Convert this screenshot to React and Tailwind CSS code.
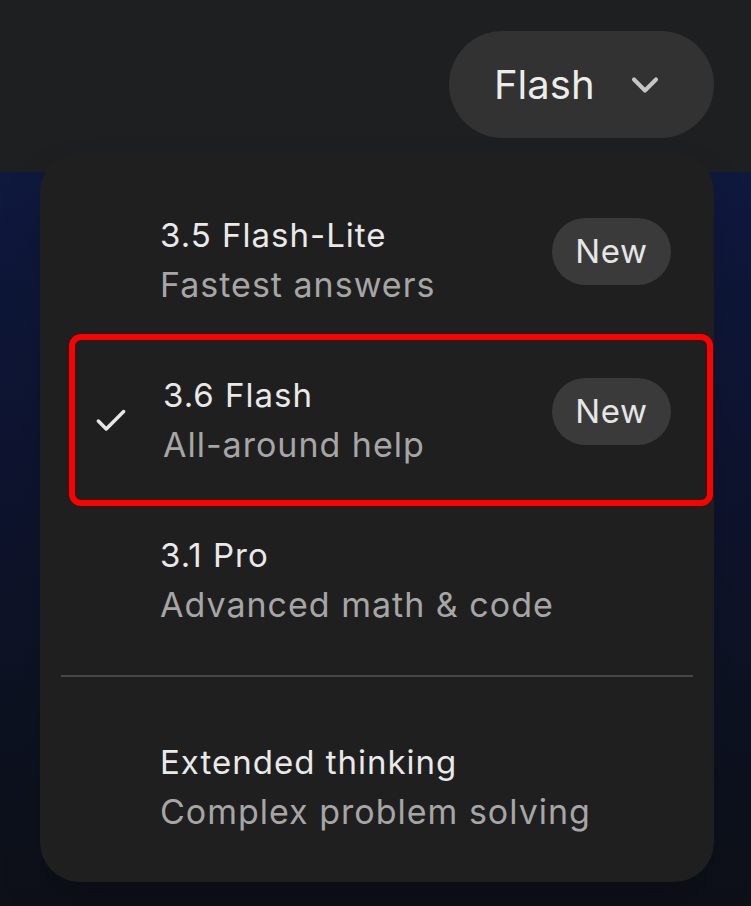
import { Check, ChevronDown } from 'lucide-react';

const models = [
  { name: '3.5 Flash-Lite', hint: 'Fastest answers', isNew: true },
  { name: '3.6 Flash', hint: 'All-around help', isNew: true, selected: true },
  { name: '3.1 Pro', hint: 'Advanced math & code' },
];

const font = { fontFamily: "Inter, 'Noto Sans', sans-serif" };

const titleCls = 'text-[33px] leading-[49px] tracking-[1px] text-[#e9e9e9]';
const hintCls = 'text-[34px] leading-[49px] tracking-[1px] text-[#a6a6a6]';

function ModelRow({ model }) {
  return (
    <div className="relative flex h-[160px] items-start py-[31px] pr-[43px]">
      {model.selected && (
        <>
          {/* highlight frame around the active model */}
          <div className="pointer-events-none absolute -top-[6px] -bottom-[6px] left-[29px] right-[1px] rounded-[12px] border-[6px] border-[#ff0000]" />
          <Check size={38} strokeWidth={2.2} className="absolute left-[52px] top-[62px] text-[#e6e6e6]" />
        </>
      )}
      <div className={`flex-1 ${model.selected ? 'pl-[123px]' : 'pl-[120px]'}`}>
        <div className={titleCls}>{model.name}</div>
        <div className={hintCls}>{model.hint}</div>
      </div>
      {model.isNew && (
        <span className="mt-[7px] flex h-[67px] w-[119px] items-center justify-center rounded-full bg-[#3a3a3a] text-[33px] tracking-[0.6px] text-[#e6e6e6]">
          New
        </span>
      )}
    </div>
  );
}

export default function App() {
  return (
    <div className="relative h-[906px] w-[751px] overflow-hidden bg-gradient-to-b from-[#0f1b47] via-[#0e1430] to-[#0d1017]" style={font}>
      {/* Header with the model switcher */}
      <div className="flex h-[172px] items-start justify-end bg-[#1e1f20] pr-[37px] pt-[31px]">
        <button className="flex h-[107px] w-[265px] items-center rounded-full bg-[#323232] pl-[45px] text-[40px] text-[#ececec]">
          <span>Flash</span>
          <ChevronDown size={44} strokeWidth={2.2} className="ml-[28px] text-[#c6c6c6]" />
        </button>
      </div>

      {/* Dropdown menu */}
      <div className="absolute left-[40px] top-[152px] h-[730px] w-[674px] rounded-[40px] bg-[#1f1f1f] pt-[28px] shadow-2xl">
        {models.map((m) => (
          <ModelRow key={m.name} model={m} />
        ))}
        <div className="mx-[21px] mt-[15px] h-[2px] bg-[#474747]" />
        <div className="pl-[120px] pt-[61px]">
          <div className={titleCls}>Extended thinking</div>
          <div className={hintCls}>Complex problem solving</div>
        </div>
      </div>
    </div>
  );
}
